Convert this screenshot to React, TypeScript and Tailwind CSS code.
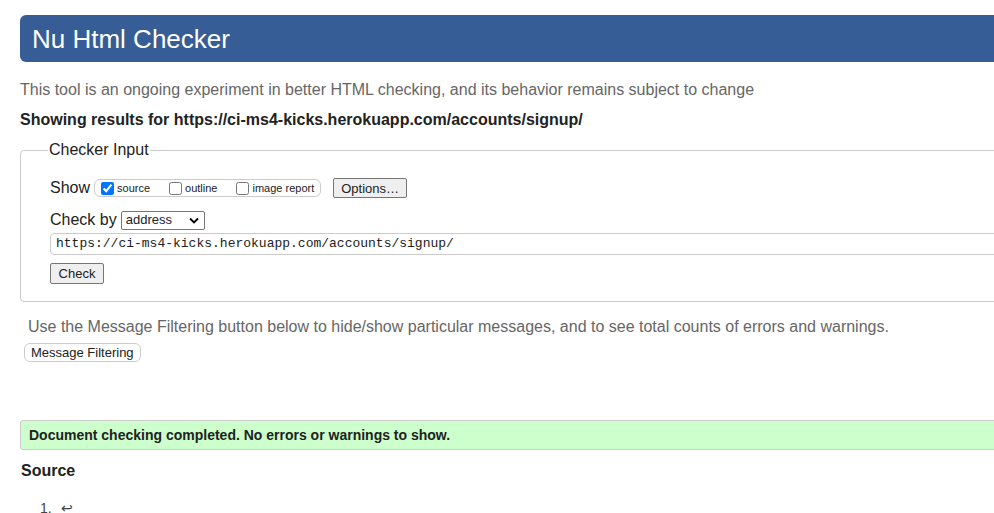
export default function App() {
  return (
    <div className="w-[994px] h-[513px] overflow-hidden bg-white font-['Liberation_Sans',Arial,sans-serif] text-[#222]">
      <div className="w-[1100px] pl-[20px]">
        <div className="mt-[15px] h-[47px] rounded-[6px] bg-[#365d95] pl-[12px] flex items-center">
          <h1 className="text-[26px] text-white leading-none">Nu Html Checker</h1>
        </div>

        <p className="mt-[18px] text-[16px] text-[#666] leading-[20px]">
          This tool is an ongoing experiment in better HTML checking, and its behavior remains subject to change
        </p>
        <p className="mt-[10px] text-[16px] font-bold leading-[20px]">
          Showing results for https://ci-ms4-kicks.herokuapp.com/accounts/signup/
        </p>

        <fieldset className="mt-[11px] border border-[#ccc] rounded-[4px] pl-[29px] pt-[19px] pb-[16px]">
          <legend className="ml-[-2px] px-[1px] text-[16px] leading-[18px]">Checker Input</legend>

          <div className="flex items-center h-[20px]">
            <span className="text-[16px] mr-[4px]">Show</span>
            <div className="flex items-center h-[18px] border border-[#ccc] rounded-[6px] pl-[6px] pr-[6px] text-[11px]">
              <input type="checkbox" defaultChecked className="w-[13px] h-[13px] m-0 accent-[#0075ff]" />
              <span className="ml-[3px] mr-[19px]">source</span>
              <input type="checkbox" className="w-[13px] h-[13px] m-0" />
              <span className="ml-[3px] mr-[19px]">outline</span>
              <input type="checkbox" className="w-[13px] h-[13px] m-0" />
              <span className="ml-[3px]">image report</span>
            </div>
            <button className="ml-[12px] h-[20px] px-[7px] text-[13px] bg-[#efefef] border border-[#767676] rounded-[2px]">
              Options…
            </button>
          </div>

          <div className="mt-[12px] flex items-center h-[20px]">
            <span className="text-[16px] mr-[4px]">Check by</span>
            <div className="relative w-[84px] h-[19px] border border-[#767676] rounded-[2px] text-[13px] flex items-center pl-[4px]">
              address
              <svg className="absolute right-[5px] top-[5px]" width="10" height="7" viewBox="0 0 10 7">
                <path d="M1 1.5 L5 5.5 L9 1.5" fill="none" stroke="#000" strokeWidth="1.8" />
              </svg>
            </div>
          </div>

          <div className="mt-[3px] h-[22px] border border-[#ccc] rounded-[4px] flex items-center pl-[5px] font-['Liberation_Mono',monospace] text-[13px]">
            https://ci-ms4-kicks.herokuapp.com/accounts/signup/
          </div>

          <button className="mt-[8px] h-[21px] w-[54px] text-[13px] bg-[#efefef] border border-[#767676] rounded-[2px]">
            Check
          </button>
        </fieldset>

        <p className="mt-[15px] ml-[8px] text-[16px] text-[#666] leading-[20px]">
          Use the Message Filtering button below to hide/show particular messages, and to see total counts of errors and warnings.
        </p>
        <button className="mt-[6px] ml-[4px] h-[19px] px-[6px] text-[13px] border border-[#ccc] rounded-[6px] bg-white leading-none">
          Message Filtering
        </button>

        <div className="mt-[56px] h-[30px] bg-[#ccffcc] border border-[#ccc] rounded-[3px] flex items-center pl-[8px] text-[14px] font-bold">
          Document checking completed. No errors or warnings to show.
        </div>

        <h2 className="mt-[12px] ml-[1px] text-[16px] font-bold leading-[18px]">Source</h2>

        <ol className="mt-[18px] ml-[20px] text-[14px] text-[#444]">
          <li className="flex">
            <span>1.</span>
            <span className="ml-[9px]">↩</span>
          </li>
        </ol>
      </div>
    </div>
  );
}
